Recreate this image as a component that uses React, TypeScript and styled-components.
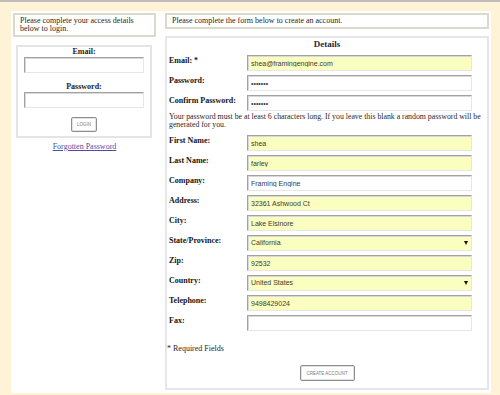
import { createGlobalStyle, styled } from "styled-components";

const GlobalStyle = createGlobalStyle`
  html, body {
    margin: 0;
    padding: 0;
  }
  body {
    background: #fef2d7;
    border-top: 2px solid #bdbdbd;
    font-family: "Liberation Serif", "Times New Roman", serif;
    color: #1c1c1c;
  }
`;

const fields: {
  label: string;
  value: string;
  filled?: boolean;
  select?: boolean;
}[] = [
  { label: "First Name:", value: "shea", filled: true },
  { label: "Last Name:", value: "farley", filled: true },
  { label: "Company:", value: "Framing Engine" },
  { label: "Address:", value: "32361 Ashwood Ct", filled: true },
  { label: "City:", value: "Lake Elsinore", filled: true },
  { label: "State/Province:", value: "California", filled: true, select: true },
  { label: "Zip:", value: "92532", filled: true },
  { label: "Country:", value: "United States", filled: true, select: true },
  { label: "Telephone:", value: "9498429024", filled: true },
  { label: "Fax:", value: "" },
];

const App = () => {
  return (
    <Page>
      <GlobalStyle />
      <Sheet>
        <LeftColumn>
          <Notice>Please complete your access details below to login.</Notice>
          <LoginBox>
            <CenterLabel>Email:</CenterLabel>
            <Field $width={120} type="text" defaultValue="" />
            <CenterLabel $spaced>Password:</CenterLabel>
            <Field $width={120} type="password" defaultValue="" />
            <Button $spaced>LOGIN</Button>
          </LoginBox>
          <ForgotLink href="#">Forgotten Password</ForgotLink>
        </LeftColumn>

        <RightColumn>
          <Notice>Please complete the form below to create an account.</Notice>
          <DetailsBox>
            <Title>Details</Title>
            <FormGrid>
              <RowLabel>Email: *</RowLabel>
              <Field $filled type="text" defaultValue="shea@framingengine.com" />
              <RowLabel>Password:</RowLabel>
              <Field type="password" defaultValue="1234567" />
              <RowLabel>Confirm Password:</RowLabel>
              <Field type="password" defaultValue="1234567" />
              <HelpText>
                Your password must be at least 6 characters long. If you leave
                this blank a random password will be generated for you.
              </HelpText>
              {fields.map((f) => (
                <Row key={f.label}>
                  <RowLabel>{f.label}</RowLabel>
                  {f.select ? (
                    <SelectWrap>
                      <Select $filled={f.filled} defaultValue={f.value}>
                        <option>{f.value}</option>
                      </Select>
                      <Arrow />
                    </SelectWrap>
                  ) : (
                    <Field $filled={f.filled} type="text" defaultValue={f.value} />
                  )}
                </Row>
              ))}
            </FormGrid>
            <Required>* Required Fields</Required>
            <Button $wide>CREATE ACCOUNT</Button>
          </DetailsBox>
        </RightColumn>
      </Sheet>
    </Page>
  );
};

const Page = styled.div`
  padding: 9px 9px 0 11px;
`;

const Sheet = styled.div`
  display: flex;
  gap: 9px;
  background: #fff;
  padding: 2px 2px 0 2px;
  min-height: 382px;
  box-sizing: border-box;
`;

const LeftColumn = styled.div`
  width: 143px;
  flex-shrink: 0;
  display: flex;
  flex-flow: column nowrap;
  align-items: stretch;
`;

const RightColumn = styled.div`
  flex: 1 1 0;
  display: flex;
  flex-flow: column nowrap;
`;

const Notice = styled.div`
  border: 2px solid #dcd8cc;
  padding: 2px 5px;
  font-size: 8px;
  line-height: 8px;
  color: #1f1f1f;
`;

const LoginBox = styled.div`
  margin: 8px 4px 0 3px;
  border: 2px solid #e4e4e4;
  padding: 0 0 4px;
  display: flex;
  flex-flow: column nowrap;
  align-items: center;
`;

const CenterLabel = styled.div<{ $spaced?: boolean }>`
  font-weight: bold;
  font-size: 8px;
  line-height: 9px;
  margin-top: ${(p) => (p.$spaced ? "9px" : "0")};
  margin-bottom: 1px;
`;

const Field = styled.input<{ $filled?: boolean; $width?: number }>`
  display: block;
  box-sizing: border-box;
  width: ${(p) => (p.$width ? `${p.$width}px` : "225px")};
  height: 16px;
  margin: 0;
  padding: 0 3px;
  border: 1px solid;
  border-color: #a2a2a2 #e6e6e6 #e6e6e6 #a2a2a2;
  box-shadow: inset 1px 1px 0 #d8d8d8;
  background: ${(p) => (p.$filled ? "#fafebe" : "#fff")};
  font-family: "Liberation Sans", Arial, sans-serif;
  font-size: 7px;
  color: #3a3a3a;
  outline: none;
`;

const SelectWrap = styled.div`
  position: relative;
  width: 225px;
  height: 16px;
  overflow: hidden;
`;

const Select = styled.select<{ $filled?: boolean }>`
  appearance: none;
  display: block;
  box-sizing: border-box;
  width: 225px;
  height: 16px;
  min-height: 0;
  margin: 0;
  padding: 0 3px;
  line-height: 14px;
  border: 1px solid;
  border-color: #a2a2a2 #e6e6e6 #e6e6e6 #a2a2a2;
  box-shadow: inset 1px 1px 0 #d8d8d8;
  border-radius: 0;
  background: ${(p) => (p.$filled ? "#fafebe" : "#fff")};
  font-family: "Liberation Sans", Arial, sans-serif;
  font-size: 7px;
  color: #3a3a3a;
  outline: none;
`;

const Arrow = styled.span`
  position: absolute;
  right: 4px;
  top: 6px;
  width: 0;
  height: 0;
  border-left: 2.5px solid transparent;
  border-right: 2.5px solid transparent;
  border-top: 4px solid #111;
  pointer-events: none;
`;

const Button = styled.button<{ $spaced?: boolean; $wide?: boolean }>`
  box-sizing: border-box;
  width: ${(p) => (p.$wide ? "55px" : "26px")};
  height: ${(p) => (p.$wide ? "16px" : "15px")};
  margin-top: ${(p) => (p.$spaced ? "9px" : "0")};
  padding: 0;
  border: 1px solid #8e8e8e;
  border-radius: 2px;
  box-shadow: inset 0 0 0 1px #e2e2e2;
  background: #fff;
  font-family: "Liberation Sans", Arial, sans-serif;
  font-size: 4.5px;
  color: #7a7a7a;
  align-self: center;
`;

const ForgotLink = styled.a`
  margin-top: 4px;
  align-self: center;
  font-size: 8px;
  line-height: 9px;
  color: #4d4da6;
  text-decoration: underline;
`;

const DetailsBox = styled.div`
  margin-top: 7px;
  border: 2px solid #e6e6ea;
  padding: 1px 0 7px;
  display: flex;
  flex-flow: column nowrap;
`;

const Title = styled.div`
  text-align: center;
  font-weight: bold;
  font-size: 9px;
  line-height: 11px;
  color: #1d2a3a;
`;

const FormGrid = styled.div`
  display: grid;
  grid-template-columns: 78px 225px 1fr;
  grid-auto-rows: 16px;
  row-gap: 4px;
  padding-left: 2px;
  margin-top: 5px;
`;

const Row = styled.div`
  display: contents;
`;

const RowLabel = styled.div`
  grid-column: 1;
  font-weight: bold;
  font-size: 8px;
  line-height: 9px;
  padding-top: 1px;
  white-space: nowrap;
  color: #151515;
`;

const HelpText = styled.div`
  grid-column: 1 / -1;
  height: 16px;
  font-size: 7.8px;
  line-height: 8px;
  margin: -2px 0 1px;
  padding-right: 1px;
  color: #1f1f1f;
`;

const Required = styled.div`
  margin-top: 14px;
  font-size: 8px;
  line-height: 8px;
  color: #1f1f1f;
  margin-bottom: 12px;
`;

export default App;
